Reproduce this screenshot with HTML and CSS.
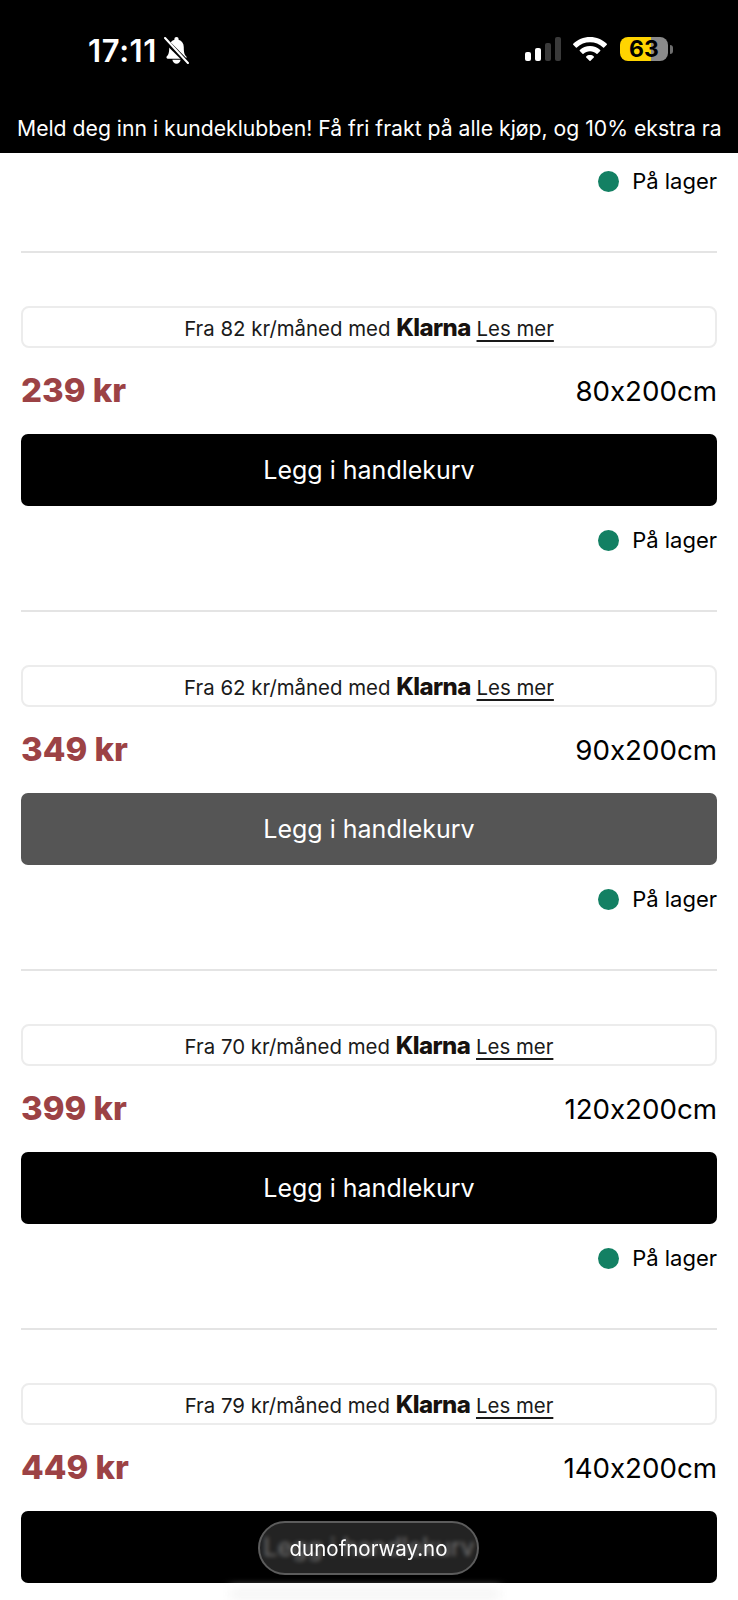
FILE: index.html
```html
<!DOCTYPE html>
<html lang="no">
<head>
    <meta charset="UTF-8">
    <meta name="viewport" content="width=device-width, initial-scale=1.0">
    <title>Dun of Norway</title>
    <link rel="stylesheet" href="styles.css">
</head>
<body>

    <header class="top">
        <div class="status-bar">
            <div class="status-left">
                <span class="clock">17:11</span>
                <svg class="bell" viewBox="0 0 24 26" width="25" height="27">
                    <path fill="#fff" d="M12 0c-1.300 0-2 .9-2 2v.6C6.800 3.500 5 6.300 5 9.600c0 5.600-.7 7.400-2.300 9-.9.900-.3 2.400 1 2.400h16.600c1.300 0 1.900-1.500 1-2.400-1.600-1.600-2.300-3.400-2.300-9 0-3.300-1.800-6.100-5-7V2c0-1.100-.7-2-2-2z"/>
                    <path fill="#fff" d="M8 22h8c-.3 2.200-1.900 3.800-4 3.800s-3.700-1.600-4-3.800z"/>
                    <path stroke="#000" stroke-width="4.600" d="M-1 1l25 25"/>
                    <path stroke="#fff" stroke-width="2" stroke-linecap="round" d="M1 1l22 24"/>
                </svg>
            </div>
            <div class="status-right">
                <div class="signal">
                    <span class="bar bar-1"></span>
                    <span class="bar bar-2"></span>
                    <span class="bar bar-3"></span>
                    <span class="bar bar-4"></span>
                </div>
                <svg class="wifi" viewBox="0 0 34 24" width="34" height="24">
                    <path fill="#fff" d="M17 0c6.500 0 12.400 2.500 16.800 6.700.3.300.3.700 0 1l-2.700 2.800c-.3.300-.7.300-1 0C26.600 7.100 22 5.200 17 5.200S7.400 7.100 3.900 10.500c-.3.300-.7.300-1 0L.2 7.700c-.3-.3-.3-.7 0-1C4.600 2.500 10.500 0 17 0z"/>
                    <path fill="#fff" d="M17 9c3.900 0 7.500 1.500 10.200 4 .3.300.3.700 0 1l-2.700 2.800c-.3.300-.7.300-1 0-1.700-1.600-4-2.500-6.500-2.500s-4.800.9-6.500 2.500c-.3.300-.7.300-1 0L6.800 14c-.3-.3-.3-.7 0-1C9.500 10.500 13.100 9 17 9z"/>
                    <path fill="#fff" d="M17 18c1.500 0 2.800.5 3.800 1.400.3.300.3.700 0 1l-3.300 3.400c-.3.300-.7.300-1 0l-3.300-3.400c-.3-.3-.3-.7 0-1 1-.9 2.300-1.400 3.800-1.400z"/>
                </svg>
                <div class="battery">
                    <div class="battery-body"><span class="battery-level">63</span></div>
                    <span class="battery-nub"></span>
                </div>
            </div>
        </div>
        <div class="announcement">Meld deg inn i kundeklubben! Få fri frakt på alle kjøp, og 10% ekstra ra</div>
    </header>

    <main class="variants">
        <div class="stock stock-first"><span class="stock-dot"></span>På lager</div>

        <section class="variant">
            <div class="klarna-box">Fra 82 kr/måned med <b class="klarna-logo">Klarna</b> <a class="read-more">Les mer</a></div>
            <div class="price-row">
                <span class="price">239 kr</span>
                <span class="size">80x200cm</span>
            </div>
            <button class="add-btn">Legg i handlekurv</button>
            <div class="stock"><span class="stock-dot"></span>På lager</div>
        </section>

        <section class="variant">
            <div class="klarna-box">Fra 62 kr/måned med <b class="klarna-logo">Klarna</b> <a class="read-more">Les mer</a></div>
            <div class="price-row">
                <span class="price">349 kr</span>
                <span class="size">90x200cm</span>
            </div>
            <button class="add-btn add-btn-active">Legg i handlekurv</button>
            <div class="stock"><span class="stock-dot"></span>På lager</div>
        </section>

        <section class="variant">
            <div class="klarna-box">Fra 70 kr/måned med <b class="klarna-logo">Klarna</b> <a class="read-more">Les mer</a></div>
            <div class="price-row">
                <span class="price">399 kr</span>
                <span class="size">120x200cm</span>
            </div>
            <button class="add-btn">Legg i handlekurv</button>
            <div class="stock"><span class="stock-dot"></span>På lager</div>
        </section>

        <section class="variant">
            <div class="klarna-box">Fra 79 kr/måned med <b class="klarna-logo">Klarna</b> <a class="read-more">Les mer</a></div>
            <div class="price-row">
                <span class="price">449 kr</span>
                <span class="size">140x200cm</span>
            </div>
            <button class="add-btn">Legg i handlekurv</button>
        </section>
    </main>

    <div class="address-fade"></div>
    <div class="address-pill">dunofnorway.no</div>

</body>
</html>
```

FILE: styles.css
```css
/* General Styles */
* {
    box-sizing: border-box;
}

html, body {
    height: 1600px;
}

body {
    margin: 0;
    position: relative;
    overflow: hidden;
    background-color: #fff;
    color: #000;
    font-family: Inter, "Liberation Sans", sans-serif;
    font-feature-settings: "calt" 0;
}

/* Top bar */
.top {
    height: 153px;
    background-color: #000;
    color: #fff;
}

.status-bar {
    height: 104px;
    padding: 37px 65px 0 88px;
    display: flex;
    justify-content: space-between;
    align-items: flex-start;
}

.status-left {
    display: flex;
    align-items: center;
    gap: 7px;
    height: 26px;
}

.clock {
    font-size: 31px;
    font-weight: 600;
    letter-spacing: 0.6px;
}

.status-right {
    display: flex;
    align-items: flex-start;
}

.signal {
    display: flex;
    align-items: flex-end;
    gap: 4px;
    height: 24px;
    margin-right: 12px;
}

.bar {
    width: 6px;
    border-radius: 2px;
    background-color: #3a3a3a;
}

.bar-1 {
    height: 9px;
    background-color: #fff;
}

.bar-2 {
    height: 13px;
    background-color: #fff;
}

.bar-3 {
    height: 18px;
}

.bar-4 {
    height: 24px;
}

.wifi {
    margin-right: 13px;
}

.battery {
    display: flex;
    align-items: center;
}

.battery-body {
    width: 48px;
    height: 24px;
    border-radius: 8px;
    background: linear-gradient(to right, #ffd400 64%, #8a8a8a 64%);
    text-align: center;
}

.battery-level {
    color: #000;
    font-size: 23px;
    font-weight: 700;
    line-height: 24px;
}

.battery-nub {
    width: 3px;
    height: 9px;
    margin-left: 2px;
    border-radius: 0 3px 3px 0;
    background-color: #6e6e6e;
}

.announcement {
    padding-left: 17px;
    font-size: 21.2px;
    line-height: 48px;
    white-space: nowrap;
    overflow: hidden;
}

/* Variant rows */
.variants {
    padding: 10px 21px 0;
}

.variant {
    border-top: 2px solid #e4e4e4;
    margin-top: 52px;
    padding-top: 53px;
}

.klarna-box {
    height: 42px;
    border: 2px solid #ececec;
    border-radius: 8px;
    font-size: 20.4px;
    line-height: 39px;
    text-align: center;
    color: #1a1a1a;
}

.klarna-logo {
    font-size: 24px;
    font-weight: 800;
    letter-spacing: -0.6px;
    color: #17120f;
}

.read-more {
    text-decoration: underline;
    text-decoration-thickness: 2px;
    text-underline-offset: 4px;
}

.price-row {
    height: 46px;
    margin-top: 20px;
    padding-bottom: 2px;
    display: flex;
    justify-content: space-between;
    align-items: center;
}

.price {
    font-size: 33px;
    font-weight: 800;
    color: #9c4245;
}

.size {
    padding-top: 2px;
    font-size: 27.7px;
}

.add-btn {
    display: block;
    width: 100%;
    height: 72px;
    margin-top: 20px;
    border: none;
    border-radius: 7px;
    background-color: #000;
    color: #fff;
    font-family: inherit;
    font-feature-settings: inherit;
    font-size: 25px;
}

.add-btn-active {
    background-color: #555;
}

.stock {
    height: 36px;
    margin-top: 16px;
    display: flex;
    justify-content: flex-end;
    align-items: center;
    font-size: 22px;
}

.stock-first {
    margin-top: 0;
}

.stock-dot {
    width: 21px;
    height: 21px;
    margin-right: 13px;
    border-radius: 50%;
    background-color: #138063;
}

/* Browser address pill over the page */
.address-pill {
    position: absolute;
    left: 258px;
    top: 1521px;
    width: 221px;
    height: 54px;
    border: 2px solid #5c5c5c;
    border-radius: 27px;
    background-color: rgba(50, 50, 50, 0.7);
    backdrop-filter: blur(2px);
    color: #fff;
    font-size: 20.5px;
    line-height: 52px;
    text-align: center;
}

.address-fade {
    position: absolute;
    left: 230px;
    top: 1588px;
    width: 270px;
    height: 12px;
    background-color: #f6f6f6;
    filter: blur(5px);
}
```
